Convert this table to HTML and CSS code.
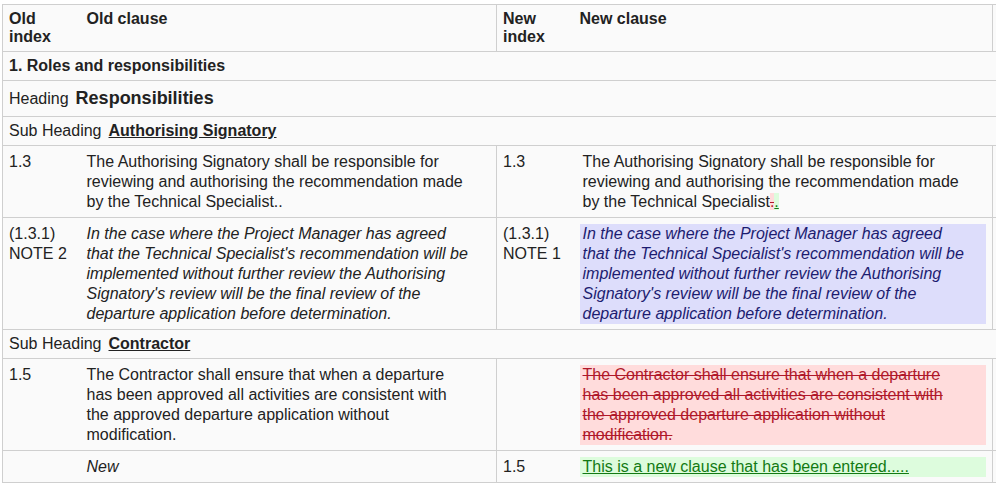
FILE: index.html
```
<!DOCTYPE html>
<html>
<head>
<meta charset="utf-8">
<link rel="stylesheet" href="styles.css">
</head>
<body>
<div class="wrap">
<table class="cmp">
  <colgroup>
    <col class="c-idx"><col class="c-clause"><col class="c-idx2"><col class="c-clause2"><col class="c-extra">
  </colgroup>
  <thead>
    <tr>
      <th class="idx">Old<br>index</th>
      <th class="clause sep">Old clause</th>
      <th class="idx">New<br>index</th>
      <th class="clause2 sep">New clause</th>
      <th class="extra"></th>
    </tr>
  </thead>
  <tbody>
    <tr class="section"><td colspan="5"><span class="sec-title">1. Roles and responsibilities</span></td></tr>
    <tr class="section heading-row"><td colspan="5"><span class="label">Heading</span><span class="heading">Responsibilities</span></td></tr>
    <tr class="section"><td colspan="5"><span class="label">Sub Heading</span><span class="subheading">Authorising Signatory</span></td></tr>
    <tr>
      <td class="idx">1.3</td>
      <td class="clause sep">The Authorising Signatory shall be responsible for reviewing and authorising the recommendation made by the Technical Specialist..</td>
      <td class="idx">1.3</td>
      <td class="clause2 sep"><div class="plain">The Authorising Signatory shall be responsible for reviewing and authorising the recommendation made by the Technical Specialist<del class="del-inline">.</del><ins class="ins-inline">.</ins></div></td>
      <td class="extra"></td>
    </tr>
    <tr>
      <td class="idx">(1.3.1)<br>NOTE 2</td>
      <td class="clause sep"><em>In the case where the Project Manager has agreed that the Technical Specialist's recommendation will be implemented without further review the Authorising Signatory's review will be the final review of the departure application before determination.</em></td>
      <td class="idx">(1.3.1)<br>NOTE 1</td>
      <td class="clause2 sep"><div class="box moved"><em>In the case where the Project Manager has agreed that the Technical Specialist's recommendation will be implemented without further review the Authorising Signatory's review will be the final review of the departure application before determination.</em></div></td>
      <td class="extra"></td>
    </tr>
    <tr class="section"><td colspan="5"><span class="label">Sub Heading</span><span class="subheading">Contractor</span></td></tr>
    <tr>
      <td class="idx">1.5</td>
      <td class="clause sep">The Contractor shall ensure that when a departure has been approved all activities are consistent with the approved departure application without modification.</td>
      <td class="idx"></td>
      <td class="clause2 sep"><div class="box removed"><del>The Contractor shall ensure that when a departure has been approved all activities are consistent with the approved departure application without modification.</del></div></td>
      <td class="extra"></td>
    </tr>
    <tr>
      <td class="idx"></td>
      <td class="clause sep"><em>New</em></td>
      <td class="idx">1.5</td>
      <td class="clause2 sep"><div class="box added"><ins>This is a new clause that has been entered.....</ins></div></td>
      <td class="extra"></td>
    </tr>
  </tbody>
</table>
</div>
</body>
</html>
```

FILE: styles.css
```
html, body {
  margin: 0;
  padding: 0;
  background: #ffffff;
}
body {
  font-family: "Liberation Sans", Arial, sans-serif;
  color: #222222;
  overflow: hidden;
}
.wrap {
  padding: 4px 0 0 2px;
  width: 1200px;
}
.cmp {
  border-collapse: collapse;
  table-layout: fixed;
  width: 1100px;
  background: #fafafa;
  border: 1px solid #cfcfcf;
  font-size: 16px;
  line-height: 20px;
}
.c-idx { width: 78px; }
.c-clause { width: 416px; }
.c-idx2 { width: 77px; }
.c-clause2 { width: 419px; }
.c-extra { width: 110px; }
.cmp th, .cmp td {
  text-align: left;
  vertical-align: top;
  padding: 6px 6px 5px 6px;
  border-bottom: 1px solid #cfcfcf;
}
.cmp td.clause {
  padding-right: 27px;
}
.cmp th {
  font-weight: bold;
  font-size: 16px;
  line-height: 18px;
  padding-top: 5px;
  padding-bottom: 5px;
}
.cmp .sep {
  border-right: 1px solid #cfcfcf;
}
.section td {
  padding: 5px 6px 5px 6px;
  line-height: 18px;
}
.heading-row td {
  line-height: 25px;
}
.sec-title {
  font-weight: bold;
  font-size: 16px;
}
.label {
  font-size: 16px;
  margin-right: 7px;
}
.heading {
  font-weight: bold;
  font-size: 18px;
}
.subheading {
  font-weight: bold;
  font-size: 16px;
  text-decoration: underline;
}
.plain {
  padding: 0 20px 0 3px;
}
.box {
  padding: 0 20px 0 3px;
}
.moved {
  background: #ddddfb;
  color: #1c1c70;
}
.removed {
  background: #ffdcdc;
  color: #b0182a;
}
.removed del {
  text-decoration: line-through;
}
.added {
  background: #ddfcdd;
  color: #137a13;
}
.added ins {
  text-decoration: underline;
}
.del-inline {
  background: #ffdcdc;
  color: #b0182a;
}
.ins-inline {
  background: #ddfcdd;
  color: #137a13;
  text-decoration: underline;
}
```
